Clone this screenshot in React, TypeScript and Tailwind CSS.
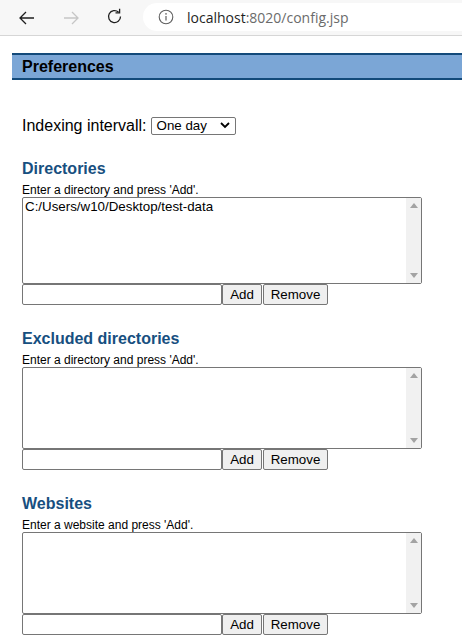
import React from "react";

const arial = { fontFamily: '"Liberation Sans", Arial, sans-serif' };

function FakeTextarea({ h, text }: { h: string; text?: string }) {
  return (
    <div className={`ml-[22px] w-[400px] ${h} flex border border-[#767676] rounded-[2px] bg-white`}>
      <div className="flex-1 pl-[2px] pt-[1px] text-[13.33px] leading-[16px] text-black">{text}</div>
      <div className="w-[15px] bg-[#f1f1f1] flex flex-col justify-between items-center py-[5px]">
        <svg width="8" height="5" viewBox="0 0 8 5"><path d="M0 5 L4 0 L8 5 Z" fill="#a3a3a3" /></svg>
        <svg width="8" height="5" viewBox="0 0 8 5"><path d="M0 0 L4 5 L8 0 Z" fill="#a3a3a3" /></svg>
      </div>
    </div>
  );
}

function InputRow() {
  return (
    <div className="ml-[22px] flex h-[21px] text-[13.33px] text-black">
      <div className="w-[200px] border border-[#767676] rounded-[2px] bg-white" />
      <div className="w-[40px] border border-[#767676] rounded-[2px] bg-[#efefef] flex items-center justify-center">Add</div>
      <div className="w-[65px] ml-[1px] border border-[#767676] rounded-[2px] bg-[#efefef] flex items-center justify-center">Remove</div>
    </div>
  );
}

function Section({ title, help, h, text, mt }: { title: string; help: string; h: string; text?: string; mt: string }) {
  return (
    <div className={mt}>
      <div className="ml-[22px] text-[16px] leading-[19px] font-bold text-[#174f80]">{title}</div>
      <div className="ml-[22px] mt-[5px] text-[12px] leading-[14px] text-black">{help}</div>
      <FakeTextarea h={h} text={text} />
      <InputRow />
    </div>
  );
}

export default function App() {
  return (
    <div className="w-[462px] h-[639px] overflow-hidden bg-white" style={arial}>
      <div className="h-[36px] bg-[#f7f7f7] border-b border-[#d6d6d6] flex items-center relative">
        <svg className="absolute left-[18px] top-[9px]" width="18" height="18" viewBox="0 0 18 18">
          <path d="M16 9 H2 M8 3 L2 9 L8 15" stroke="#1f1f1f" strokeWidth="1.3" fill="none" />
        </svg>
        <svg className="absolute left-[62px] top-[9px]" width="18" height="18" viewBox="0 0 18 18">
          <path d="M2 9 H16 M10 3 L16 9 L10 15" stroke="#c6c6c6" strokeWidth="1.3" fill="none" />
        </svg>
        <svg className="absolute left-[106px] top-[8px]" width="18" height="18" viewBox="0 0 18 18">
          <path d="M14.5 8.5 A6 6 0 1 1 12.6 4.2" stroke="#1f1f1f" strokeWidth="1.3" fill="none" />
          <path d="M9.5 3.6 H13.6 V-0.5" stroke="#1f1f1f" strokeWidth="1.3" fill="none" transform="translate(0 1.3)" />
        </svg>
        <div className="absolute left-[143px] top-[3px] w-[340px] h-[28px] bg-white rounded-[14px] flex items-center">
          <svg className="ml-[15px]" width="16" height="16" viewBox="0 0 16 16">
            <circle cx="8" cy="8" r="6.8" stroke="#5f5f5f" strokeWidth="1.1" fill="none" />
            <path d="M8 7 V11.5" stroke="#5f5f5f" strokeWidth="1.2" />
            <circle cx="8" cy="4.9" r="0.8" fill="#5f5f5f" />
          </svg>
          <span className="ml-[13px] text-[14px]" style={{ fontFamily: '"Open Sans", "Noto Sans", sans-serif' }}>
            <span className="text-[#1f1f1f]">localhost</span>
            <span className="text-[#6b6b6b]">:8020/config.jsp</span>
          </span>
        </div>
      </div>

      <div className="mt-[17px] ml-[12px] h-[27px] border-t-2 border-b-2 border-[#134a7a] bg-[#7ba6d6] flex items-center">
        <span className="ml-[10px] text-[16px] font-bold text-black">Preferences</span>
      </div>

      <div className="mt-[36px] ml-[22px] flex items-center h-[19px]">
        <span className="text-[16px] text-black">Indexing intervall:</span>
        <div className="ml-[4px] w-[85px] h-[18px] border border-[#767676] rounded-[2px] bg-white flex items-center justify-between px-[5px] text-[13.33px] text-black">
          <span>One day</span>
          <svg width="10" height="7" viewBox="0 0 10 7"><path d="M1 1 L5 5 L9 1" stroke="#000" strokeWidth="1.8" fill="none" /></svg>
        </div>
      </div>

      <Section mt="mt-[24px]" title="Directories" help="Enter a directory and press 'Add'." h="h-[87px]" text="C:/Users/w10/Desktop/test-data" />
      <Section mt="mt-[24px]" title="Excluded directories" help="Enter a directory and press 'Add'." h="h-[82px]" />
      <Section mt="mt-[24px]" title="Websites" help="Enter a website and press 'Add'." h="h-[82px]" />
    </div>
  );
}
